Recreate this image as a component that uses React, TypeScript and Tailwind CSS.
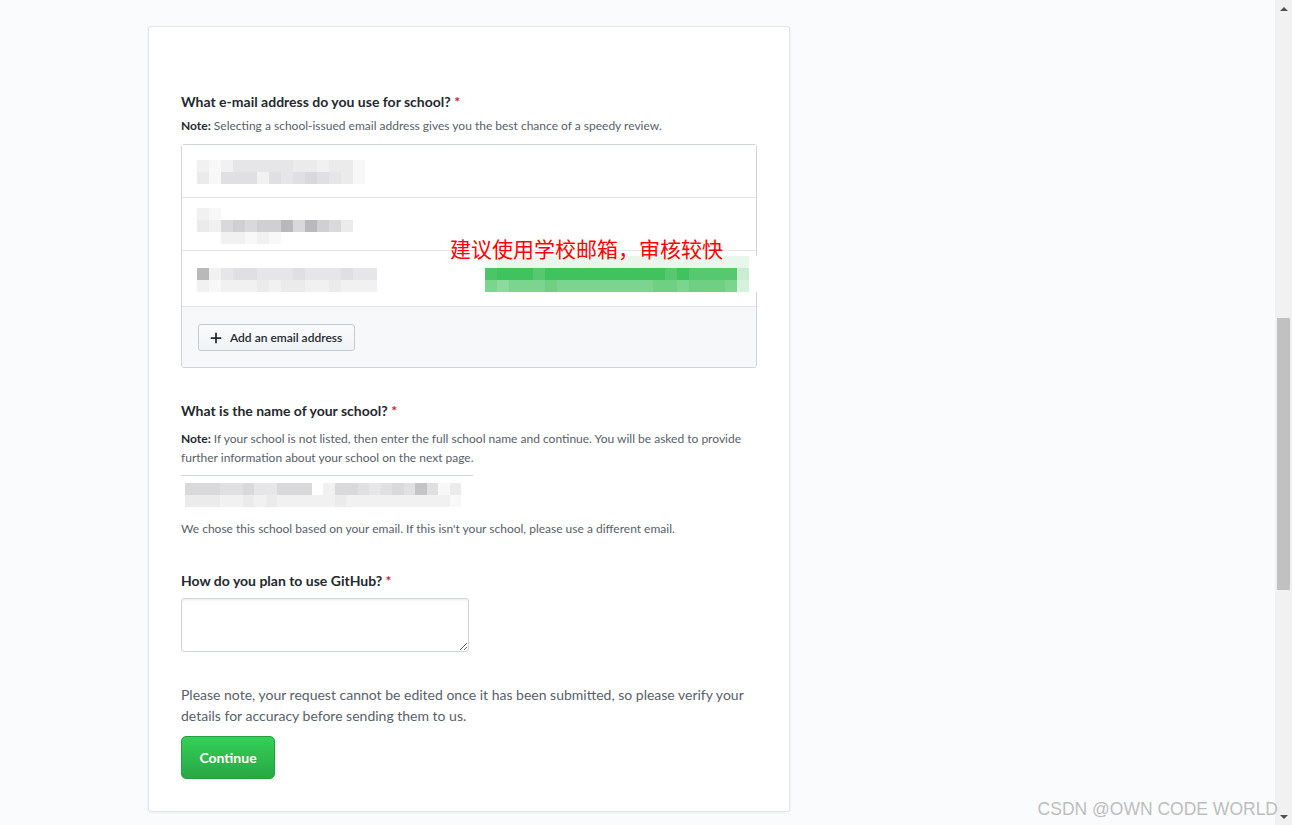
import React from 'react';

// palette for the pixelated (mosaic) redactions in the screenshot
const GRAY: Record<string, string> = {
  '0': 'bg-[#f8f8f8]',
  '1': 'bg-[#f1f1f1]',
  '2': 'bg-[#ebebeb]',
  '3': 'bg-[#e6e6e8]',
  '4': 'bg-[#e0e0e2]',
  '5': 'bg-[#d9d9db]',
  '6': 'bg-[#d0d0d3]',
  '7': 'bg-[#c4c4c6]',
  '8': 'bg-[#b9b9bb]',
  '9': 'bg-transparent',
};

const GREEN: Record<string, string> = {
  a: 'bg-[#e9f6ec]',
  b: 'bg-[#4cc566]',
  c: 'bg-[#40c25f]',
  d: 'bg-[#56c86f]',
  e: 'bg-[#7cd58f]',
  f: 'bg-[#6fd084]',
  g: 'bg-[#8bdb9c]',
  h: 'bg-[#c9ecd2]',
  i: 'bg-[#d6f1dc]',
  j: 'bg-[#f4fbf5]',
  k: 'bg-white',
};

const Mosaic: React.FC<{ rows: string[]; palette: Record<string, string>; className?: string }> = ({ rows, palette, className }) => (
  <div className={`flex flex-col ${className ?? ''}`}>
    {rows.map((row, i) => (
      <div key={i} className="flex">
        {row.split('').map((c, j) => (
          <div key={j} className={`w-[12px] h-[12px] ${palette[c]}`} />
        ))}
      </div>
    ))}
  </div>
);

const Required = () => <span className="text-[#cb2431]"> *</span>;

const Label: React.FC<{ children: React.ReactNode }> = ({ children }) => (
  <div className="text-[14px] leading-[21px] font-bold text-[#24292e]">
    {children}
    <Required />
  </div>
);

const Note: React.FC<{ children: React.ReactNode; className?: string }> = ({ children, className }) => (
  <p className={`text-[12px] leading-[19px] text-[#586069] ${className ?? ''}`}>
    <b className="text-[#24292e] font-bold">Note:</b> {children}
  </p>
);

const PlusIcon = () => (
  <svg width="12" height="14" viewBox="0 0 12 16" className="fill-[#24292e]">
    <path fillRule="evenodd" d="M12 9H7v5H5V9H0V7h5V2h2v5h5v2z" />
  </svg>
);

export default function App() {
  return (
    <div className="relative flex h-[825px] w-full overflow-hidden bg-[#fafbfc] font-['Lato','Liberation_Sans',sans-serif]">
      <main className="flex-1">
        <div className="ml-[148px] mt-[26px] w-[642px] rounded-[3px] border border-[#e1e4e8] bg-white px-8 pt-[64px] pb-[32px] shadow-[0_1px_3px_rgba(27,31,35,0.06)]">
          {/* email */}
          <Label>What e-mail address do you use for school?</Label>
          <Note className="mt-[4px]">Selecting a school-issued email address gives you the best chance of a speedy review.</Note>

          <div className="relative mt-[9px] rounded-[3px] border border-[#d1d5da]">
            <div className="h-[53px] border-b border-[#e1e4e8] bg-white pl-[15px] pt-[15px]">
              <Mosaic palette={GRAY} rows={['10133333221220', '20444143454320']} />
            </div>
            <div className="h-[53px] border-b border-[#e1e4e8] bg-white pl-[15px] pt-[10px]">
              <Mosaic palette={GRAY} rows={['1099999999999', '2156566858652', '9911010999999']} />
            </div>
            <div className="h-[56px] border-b border-[#e1e4e8] bg-white pl-[15px] pt-[17px]">
              <Mosaic palette={GRAY} rows={['813443334333433', '101112122112111']} />
            </div>
            <div className="rounded-b-[3px] bg-[#f6f8fa] px-4 pt-[17px] pb-[16px]">
              <button
                type="button"
                className="flex h-[27px] items-center gap-[8px] rounded-[3px] border border-[#c6cbd1] bg-gradient-to-b from-[#fafbfc] to-[#eff3f6] pl-[11px] pr-[12px] text-[12px] font-semibold text-[#24292e]"
              >
                <PlusIcon />
                Add an email address
              </button>
            </div>

            {/* annotation drawn over the screenshot */}
            <Mosaic
              palette={GREEN}
              className="absolute left-[303px] top-[111px]"
              rows={['jaaaaaaaaaaaaaaaaaaaaak', 'bcccdccccccccccdcddddhk', 'egeeefeeeeeeeeffefffeik']}
            />
            <div className="absolute left-[268px] top-[90px] z-10 font-['Noto_Sans_CJK_SC',sans-serif] text-[21px] leading-[26px] text-[#ff0000]">
              建议使用学校邮箱，审核较快
            </div>
          </div>

          {/* school */}
          <div className="mt-[32px]">
            <Label>What is the name of your school?</Label>
            <Note className="mt-[8px]">
              If your school is not listed, then enter the full school name and continue. You will be asked to provide further information about your school on the next page.
            </Note>
            <div className="mt-[8px] h-[36px] w-[292px] border-t border-[#d1d5da] pl-[4px] pt-[7px]">
              <Mosaic palette={GRAY} rows={['5554453355591554345474029', '2221121211111211111111109']} />
            </div>
            <p className="mt-[8px] text-[12px] leading-[19px] text-[#586069]">
              We chose this school based on your email. If this isn't your school, please use a different email.
            </p>
          </div>

          {/* usage */}
          <div className="mt-[32px]">
            <Label>How do you plan to use GitHub?</Label>
            <textarea className="mt-[7px] block h-[54px] w-[288px] rounded-[3px] border border-[#d1d5da] bg-white shadow-[inset_0_1px_2px_rgba(27,31,35,0.075)] outline-none" />
          </div>

          <p className="mt-[32px] text-[14px] leading-[21px] text-[#586069]">
            Please note, your request cannot be edited once it has been submitted, so please verify your details for accuracy before sending them to us.
          </p>

          <button
            type="button"
            className="mt-[10px] h-[43px] w-[94px] rounded-[5px] border border-[#23a03e] bg-gradient-to-b from-[#34d058] to-[#28a745] text-[14px] font-bold text-white"
          >
            Continue
          </button>
        </div>
      </main>

      {/* browser scrollbar */}
      <div className="flex w-[17px] flex-col bg-[#f1f1f1]">
        <div className="flex h-[17px] items-center justify-center">
          <div className="h-0 w-0 border-x-[4px] border-b-[4px] border-x-transparent border-b-[#505050]" />
        </div>
        <div className="flex-1">
          <div className="mx-[2px] mt-[301px] h-[272px] bg-[#c1c1c1]" />
        </div>
        <div className="flex h-[17px] items-center justify-center">
          <div className="h-0 w-0 border-x-[4px] border-t-[4px] border-x-transparent border-t-[#505050]" />
        </div>
      </div>

      <div className="absolute right-[14px] bottom-[6px] font-['Liberation_Sans',Arial,sans-serif] text-[17.5px] leading-[20px] text-[#bdbdbd] [text-shadow:0_0_1px_#fff]">
        CSDN @OWN CODE WORLD
      </div>
    </div>
  );
}
